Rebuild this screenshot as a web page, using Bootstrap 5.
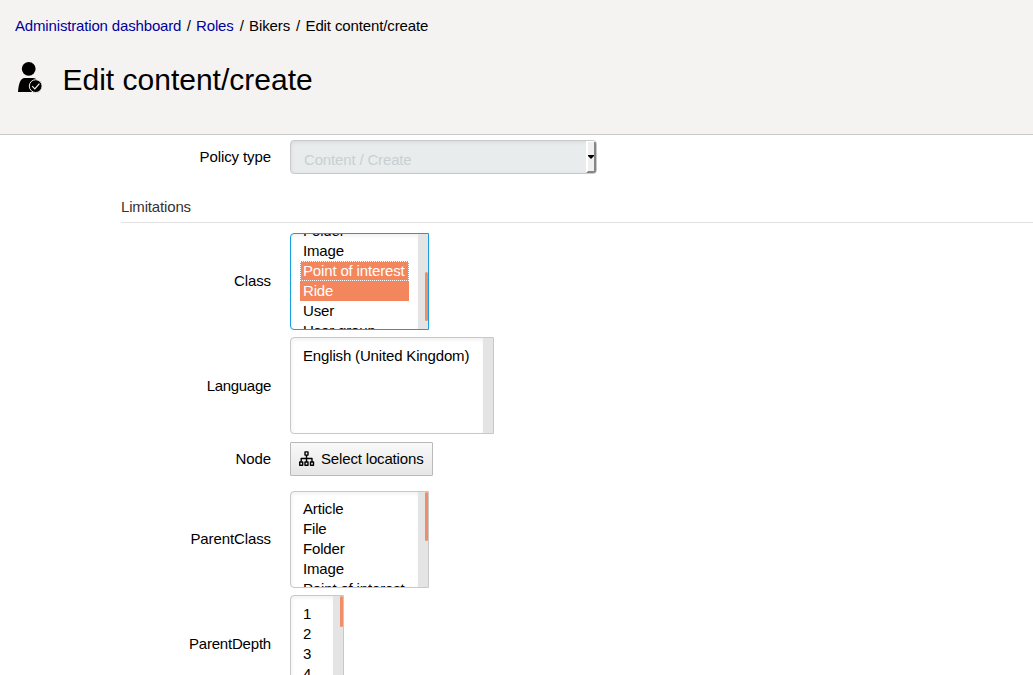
<!DOCTYPE html>
<html lang="en">
<head>
<meta charset="utf-8">
<title>Edit content/create</title>
<link href="https://cdn.jsdelivr.net/npm/bootstrap@5.3.0/dist/css/bootstrap.min.css" rel="stylesheet">
<style>
body{font:15px/20px "Liberation Sans",Arial,sans-serif;letter-spacing:-.16px;color:#000;background:#fff;height:675px}
.top-area{background:#f5f3f2;border-bottom:1px solid #c9c9c9;height:135px;padding:16px 15px 0}
.crumbs{--bs-breadcrumb-divider-color:#000;--bs-breadcrumb-item-padding-x:5.4px;--bs-breadcrumb-item-active-color:#000;--bs-breadcrumb-font-size:15px}
.crumbs .breadcrumb-item:nth-child(n+3){letter-spacing:-.12px;padding-left:6px}
.crumbs a{color:#00009c;text-decoration:none}
.page-title{font-size:30px;line-height:36px;font-weight:400;letter-spacing:0;padding-top:2px;margin-left:19.5px}
.title-row{margin-top:24px}
.title-row svg{margin-bottom:2px}
.policy-form{padding-top:5px}
.field-row{margin-bottom:7px}
.field-label{width:271px;margin-right:19px;text-align:right;letter-spacing:-.1px}
.list-label{padding-bottom:2px}
.type-select{width:307px;height:34px;background:#e8ecec;border:1px solid #c9c9c9;border-radius:4px;box-shadow:inset 0 1px 4px rgba(0,0,0,.08);color:#c9d0d1;overflow:hidden;padding-left:13px}
.type-arrow{width:10px;background:#f1f0ef;border:solid;border-width:1px 2px 2px 2px;border-color:#fff #858585 #858585 #fff}
.limit-head{margin:23px 0 10px 121px;height:26px;border-bottom:1px solid #e2e2e2;color:#333}
.pick-list{height:97px;border:1px solid #c8c8c8;border-radius:4px 0 0 4px;overflow:hidden;background:#fff}
.pick-list.active{border-color:#169ddb}
.pick-items{padding:7px 9px 0;box-shadow:inset 1px 2px 4px rgba(0,0,0,.06)}
.pick-items.lower{padding-top:8px}
.pick-items.scrolled>:first-child{margin-top:-20px}
.pick-items>div{height:20px;padding-left:3px;white-space:nowrap;flex:none}
.pick-items .chosen{background:#f3865c;color:#fff}
.pick-items .focused{outline:1px dotted #fff;outline-offset:-1px}
.track{width:10px;background:#e4e4e4}
.thumb{width:3px;height:49px;background:#f08e68;border-radius:2px}
.locate-btn{--bs-btn-padding-x:8px;--bs-btn-padding-y:0;--bs-btn-font-size:15px;--bs-btn-color:#000;--bs-btn-border-radius:1px;--bs-btn-border-color:#b9b9b9;width:143px;height:34px;letter-spacing:-.16px;background:linear-gradient(#f9f9f9,#e6e6e6)}
</style>
<script src="https://cdn.jsdelivr.net/npm/bootstrap@5.3.0/dist/js/bootstrap.bundle.min.js"></script>
</head>
<body class="overflow-hidden">
<header class="top-area">
  <nav aria-label="breadcrumb"><ol class="breadcrumb crumbs mb-0">
    <li class="breadcrumb-item"><a href="#">Administration dashboard</a></li>
    <li class="breadcrumb-item"><a href="#">Roles</a></li>
    <li class="breadcrumb-item">Bikers</li>
    <li class="breadcrumb-item active">Edit content/create</li>
  </ol></nav>
  <div class="d-flex align-items-center title-row">
    <svg width="28" height="34" viewBox="0 0 28 34" class="flex-shrink-0"><circle cx="13.7" cy="7.8" r="6.9"/><path d="M3 31Q4 17 9.5 17H18Q21 17 22.5 20V31Z"/><circle cx="20.7" cy="25.1" r="6.4" stroke="#f5f3f2" stroke-width="1"/><path d="M17.2 25.2l2.6 2.6 4.6-5.2" fill="none" stroke="#f5f3f2" stroke-width="1.2"/></svg>
    <h1 class="page-title mb-0">Edit content/create</h1>
  </div>
</header>
<main class="policy-form">
  <div class="d-flex align-items-center">
    <div class="field-label">Policy type</div>
    <div class="type-select d-flex"><span class="flex-grow-1" style="padding-top:9px">Content / Create</span><span class="type-arrow d-flex align-items-center"><svg class="flex-shrink-0" width="6" height="4"><path d="M0 0h6v1L3 4 0 1z"/></svg></span></div>
  </div>
  <div class="limit-head">Limitations</div>
  <div class="d-flex align-items-center field-row">
    <div class="field-label list-label">Class</div>
    <div class="pick-list active d-flex" style="width:139px">
      <div class="pick-items scrolled flex-grow-1"><div>Folder</div><div>Image</div><div class="chosen focused">Point of interest</div><div class="chosen">Ride</div><div>User</div><div>User group</div></div>
      <div class="track d-flex justify-content-end"><div class="thumb" style="margin-top:38px"></div></div>
    </div>
  </div>
  <div class="d-flex align-items-center" style="margin-bottom:8px">
    <div class="field-label" style="letter-spacing:-.3px">Language</div>
    <div class="pick-list d-flex" style="width:204px">
      <div class="pick-items lower flex-grow-1"><div>English (United Kingdom)</div></div><div class="track"></div>
    </div>
  </div>
  <div class="d-flex align-items-center" style="margin-bottom:15px">
    <div class="field-label">Node</div>
    <button type="button" class="btn locate-btn d-flex align-items-center text-nowrap"><svg class="flex-shrink-0" width="16" height="16" viewBox="0 0 16 16" fill="none" stroke="#000" stroke-width="1.4" stroke-linejoin="round" style="margin-right:6px"><path d="M6 .9h3v3.2H6zM.7 11h3v3.2h-3zM6 11h3v3.2H6zM11.5 11h3v3.2h-3zM7.5 4.1V11M2.2 11V7.5H13V11"/></svg>Select locations</button>
  </div>
  <div class="d-flex align-items-center field-row">
    <div class="field-label list-label">ParentClass</div>
    <div class="pick-list d-flex" style="width:139px">
      <div class="pick-items flex-grow-1"><div>Article</div><div>File</div><div>Folder</div><div>Image</div><div>Point of interest</div></div>
      <div class="track d-flex justify-content-end"><div class="thumb"></div></div>
    </div>
  </div>
  <div class="d-flex align-items-center field-row">
    <div class="field-label" style="letter-spacing:-.2px">ParentDepth</div>
    <div class="pick-list d-flex" style="width:54px">
      <div class="pick-items lower flex-grow-1"><div>1</div><div>2</div><div>3</div><div>4</div></div>
      <div class="track d-flex justify-content-end"><div class="thumb" style="height:31px"></div></div>
    </div>
  </div>
</main>
</body>
</html>
